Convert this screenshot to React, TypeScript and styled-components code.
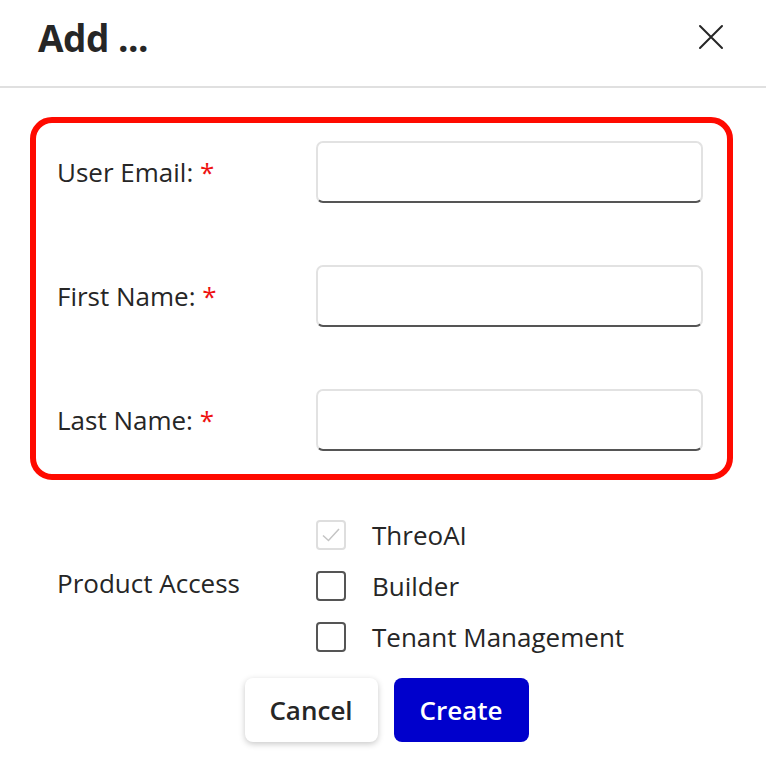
import React from 'react';
import styled, { createGlobalStyle } from 'styled-components';

const GlobalStyle = createGlobalStyle`
  html, body {
    margin: 0;
    padding: 0;
    background: #fff;
    font-family: 'Open Sans', 'Noto Sans', sans-serif;
    color: #262626;
  }
`;

const products = [
  { name: 'ThreoAI', locked: true },
  { name: 'Builder', locked: false },
  { name: 'Tenant Management', locked: false },
];

const fields = ['User Email:', 'First Name:', 'Last Name:'];

const App: React.FC = () => {
  return (
    <>
      <GlobalStyle />
      <Dialog>
        <Header>
          <Title>Add ...</Title>
          <CloseButton aria-label="Close">
            <svg width="26" height="26" viewBox="0 0 26 26" fill="none" stroke="#262626" strokeWidth="2" strokeLinecap="round">
              <path d="M2 2 L24 24 M24 2 L2 24" />
            </svg>
          </CloseButton>
        </Header>
        <Body>
          <Highlight>
            {fields.map((label) => (
              <FieldRow key={label}>
                <Label>
                  {label} <Required>*</Required>
                </Label>
                <TextInput type="text" />
              </FieldRow>
            ))}
          </Highlight>

          <AccessRow>
            <AccessLabel>Product Access</AccessLabel>
            <CheckList>
              {products.map((p) => (
                <CheckItem key={p.name}>
                  <Box $locked={p.locked}>
                    {p.locked && (
                      <svg width="26" height="26" viewBox="0 0 26 26" fill="none" stroke="#c4c4c4" strokeWidth="1.5">
                        <path d="M5 13.5 L10.5 18.5 L21 7" />
                      </svg>
                    )}
                  </Box>
                  <CheckText>{p.name}</CheckText>
                </CheckItem>
              ))}
            </CheckList>
          </AccessRow>

          <Actions>
            <CancelButton>Cancel</CancelButton>
            <CreateButton>Create</CreateButton>
          </Actions>
        </Body>
      </Dialog>
    </>
  );
};

export default App;

const Dialog = styled.div`
  width: 766px;
  min-height: 768px;
  background: #fff;
`;

const Header = styled.div`
  height: 88px;
  display: flex;
  align-items: center;
  justify-content: space-between;
  padding: 0 42px 12px 38px;
  box-sizing: border-box;
  border-bottom: 2px solid #e0e0e0;
`;

const Title = styled.h1`
  margin: 0;
  font-size: 37px;
  font-weight: 700;
  letter-spacing: -0.5px;
  color: #262626;
`;

const CloseButton = styled.button`
  background: none;
  border: none;
  padding: 0;
  display: flex;
  cursor: pointer;
`;

const Body = styled.div`
  padding: 29px 33px 0 30px;
`;

const Highlight = styled.div`
  border: 6px solid #ff0a00;
  border-radius: 22px;
  padding: 18px 24px 23px 21px;
  display: flex;
  flex-direction: column;
  gap: 62px;
`;

const FieldRow = styled.div`
  display: grid;
  grid-template-columns: 259px 1fr;
  align-items: center;
`;

const Label = styled.span`
  font-size: 26px;
  line-height: 34px;
  color: #262626;
`;

const AccessLabel = styled(Label)`
  padding-bottom: 6px;
`;

const Required = styled.span`
  color: #ee1111;
`;

const TextInput = styled.input`
  height: 62px;
  box-sizing: border-box;
  border: 2px solid #e2e2e2;
  border-bottom: 2px solid #555;
  border-radius: 7px;
  font-size: 20px;
  padding: 0 14px;
  outline: none;
`;

const AccessRow = styled.div`
  display: grid;
  grid-template-columns: 259px 1fr;
  align-items: center;
  padding: 40px 0 0 27px;
`;

const CheckList = styled.div`
  display: flex;
  flex-direction: column;
  gap: 21px;
`;

const CheckItem = styled.label`
  display: flex;
  align-items: center;
  height: 30px;
  gap: 26px;
`;

const Box = styled.span<{ $locked: boolean }>`
  width: 30px;
  height: 30px;
  box-sizing: border-box;
  border: 2px solid ${({ $locked }) => ($locked ? '#dedede' : '#555')};
  border-radius: 4px;
  display: flex;
  align-items: center;
  justify-content: center;
`;

const CheckText = styled.span`
  font-size: 26px;
  line-height: 30px;
  color: #262626;
`;

const Actions = styled.div`
  display: flex;
  justify-content: center;
  gap: 16px;
  padding: 26px 0 0 10px;
`;

const BaseButton = styled.button`
  height: 64px;
  border-radius: 8px;
  font-family: inherit;
  font-size: 26px;
  font-weight: 600;
  cursor: pointer;
`;

const CancelButton = styled(BaseButton)`
  width: 133px;
  background: #fff;
  color: #262626;
  border: none;
  box-shadow: 0 2px 6px rgba(0, 0, 0, 0.22);
`;

const CreateButton = styled(BaseButton)`
  width: 135px;
  background: #0000cc;
  color: #fff;
  border: none;
`;
